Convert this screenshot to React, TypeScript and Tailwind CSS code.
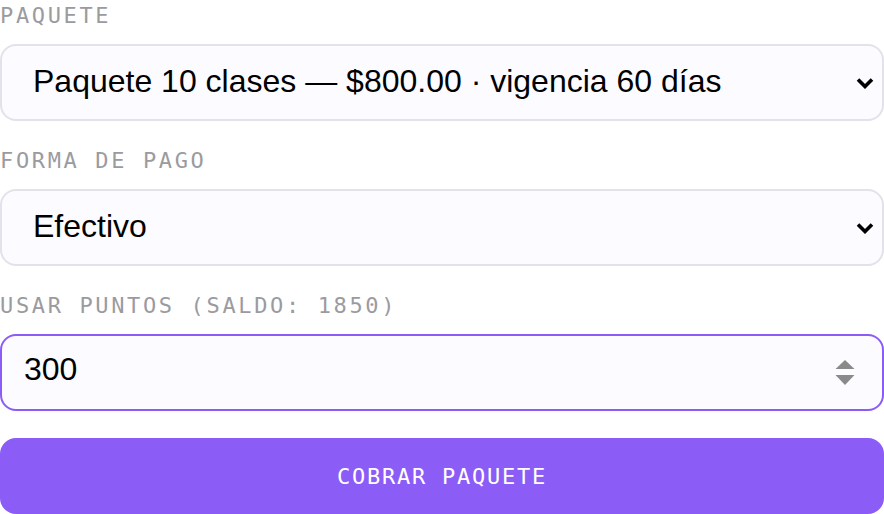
import { useEffect, useRef } from "react";

const labelCls =
  "block text-[22px] leading-[32px] tracking-[0.12em] uppercase text-[#9b9b9f] [font-family:'DejaVu_Sans_Mono',monospace]";

const fieldCls =
  "block w-full h-[77px] rounded-[16px] border-2 bg-[#fcfbff] text-[32px] text-black [font-family:'Liberation_Sans',Arial,sans-serif] outline-none";

function Chevron() {
  return (
    <svg
      className="pointer-events-none absolute right-[10px] top-1/2 -translate-y-1/2"
      width="18"
      height="12"
      viewBox="0 0 18 12"
      fill="none"
    >
      <path d="M2 2.5 L9 9.5 L16 2.5" stroke="#000" strokeWidth="3.6" />
    </svg>
  );
}

function Spinner() {
  return (
    <svg
      className="pointer-events-none absolute right-[29px] top-1/2 -translate-y-1/2"
      width="20"
      height="28"
      viewBox="0 0 20 28"
    >
      <polygon points="0.5,10 10,1 19.5,10" fill="#8a8a8a" />
      <polygon points="0.5,16 19.5,16 10,26" fill="#8a8a8a" />
    </svg>
  );
}

export default function App() {
  const pointsRef = useRef<HTMLInputElement>(null);

  useEffect(() => {
    pointsRef.current?.focus();
  }, []);

  return (
    <div className="w-[884px] h-[514px] overflow-hidden bg-white">
      <div className="flex flex-col">
        <label className={labelCls}>Paquete</label>
        <div className="relative mt-[12px]">
          <select
            className={`${fieldCls} appearance-none border-[#e3e2ea] pl-[31px] pr-[40px] pb-[4px]`}
            defaultValue="p10"
          >
            <option value="p10">Paquete 10 clases — $800.00 · vigencia 60 días</option>
            <option value="p5">Paquete 5 clases — $450.00 · vigencia 30 días</option>
          </select>
          <Chevron />
        </div>

        <label className={`${labelCls} mt-[24px]`}>Forma de pago</label>
        <div className="relative mt-[12px]">
          <select
            className={`${fieldCls} appearance-none border-[#e3e2ea] pl-[31px] pr-[40px] pb-[4px]`}
            defaultValue="efectivo"
          >
            <option value="efectivo">Efectivo</option>
            <option value="tarjeta">Tarjeta</option>
            <option value="transferencia">Transferencia</option>
          </select>
          <Chevron />
        </div>

        <label className={`${labelCls} mt-[24px]`}>Usar puntos (saldo: 1850)</label>
        <div className="relative mt-[12px]">
          <input
            ref={pointsRef}
            type="number"
            defaultValue={300}
            min={0}
            max={1850}
            className={`${fieldCls} h-[76px] border-[#8b5cf6] pl-[22px] pr-[60px] pb-[6px] [appearance:textfield] [&::-webkit-inner-spin-button]:appearance-none [&::-webkit-outer-spin-button]:appearance-none`}
          />
          <Spinner />
        </div>

        <button className="mt-[27px] h-[76px] w-full rounded-[16px] bg-[#8b5cf6] text-[22px] tracking-[0.08em] uppercase text-white [font-family:'DejaVu_Sans_Mono',monospace]">
          Cobrar paquete
        </button>
      </div>
    </div>
  );
}
